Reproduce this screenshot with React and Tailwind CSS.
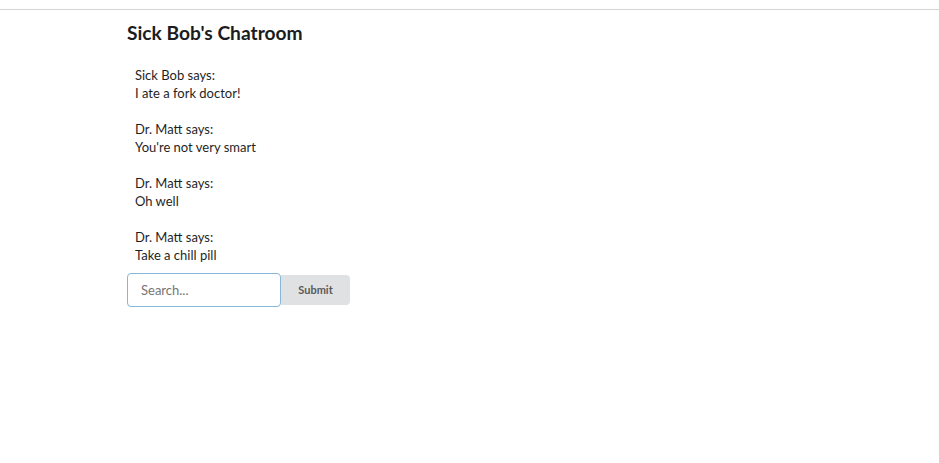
const MESSAGES = [
  { user: 'Sick Bob', text: 'I ate a fork doctor!' },
  { user: 'Dr. Matt', text: "You're not very smart" },
  { user: 'Dr. Matt', text: 'Oh well' },
  { user: 'Dr. Matt', text: 'Take a chill pill' },
];

const App = () => {
  return (
    <div className="min-h-screen bg-white font-['Lato',sans-serif] text-[rgba(0,0,0,0.87)]">
      <div className="h-[10px] border-b border-[#d4d4d5]" />
      <div className="mx-auto w-[685px]">
        <h1 className="mt-[11px] text-[19.2px] font-bold leading-[24px] text-[#1b1c1d]">Sick Bob's Chatroom</h1>

        <div className="mt-[21px] pl-[8px]">
          {MESSAGES.map((msg, i) => (
            <div key={i} className="mb-[18px] text-[13px] leading-[18px] text-[#1f1f1f] last:mb-0">
              <p>{msg.user} says:</p>
              <p>{msg.text}</p>
            </div>
          ))}
        </div>

        <form className="mt-[9px] flex items-center" onSubmit={(e) => e.preventDefault()}>
          <input
            placeholder="Search..."
            className="h-[34px] w-[154px] rounded-[4px] border border-[#85b7d9] px-[13px] text-[13px] text-[#333] placeholder:text-[#757575] focus:outline-none"
          />
          <button type="submit" className="h-[30px] w-[69px] rounded-r-[4px] bg-[#e0e1e2] text-[11px] font-bold text-[#5a5a5a]">
            Submit
          </button>
        </form>
      </div>
    </div>
  );
};

export default App;
